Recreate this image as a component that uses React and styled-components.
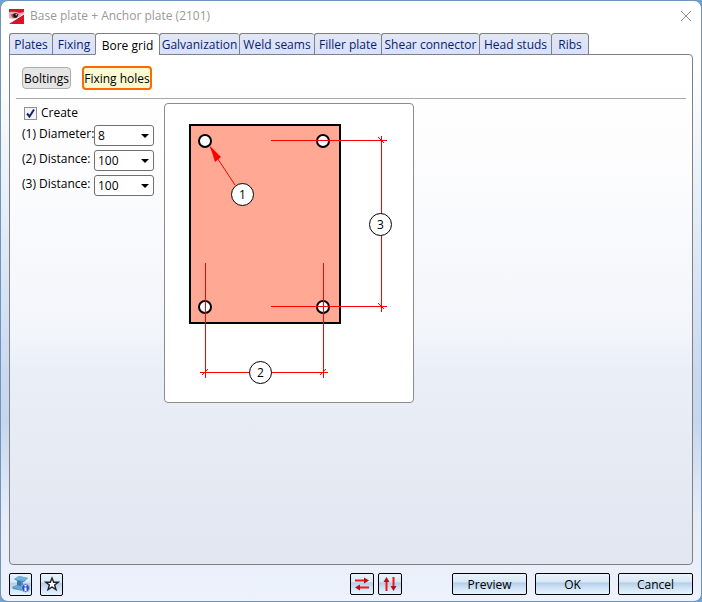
import React, { useState } from "react";
import styled, { createGlobalStyle, css } from "styled-components";

const Global = createGlobalStyle`
  * { box-sizing: border-box; }
  html, body, #root { height: 100%; }
  body {
    margin: 0;
    background: #6ba3d6;
    font-family: "Open Sans", "Noto Sans", sans-serif;
    font-size: 12px;
    line-height: 16px;
    color: #000;
  }
  button, select, input { font: inherit; color: inherit; margin: 0; }
`;

const Dialog = styled.main`
  height: 100vh;
  display: flex;
  flex-direction: column;
  padding: 0 8px;
  border: 1px solid #6f95ba;
  border-radius: 8px;
  background: linear-gradient(#fff 0%, #fff 10%, #c9daf0 62%, #c5d7ee 70%, #e6edf9 86%, #edf2fc 100%);
`;

const TitleBar = styled.header`
  display: flex;
  align-items: center;
  height: 32px;
  flex: none;
  gap: 6px;
  padding-bottom: 2px;
  color: #999;
`;

const Title = styled.h1`
  flex: 1;
  margin: 0;
  font-size: 12px;
  font-weight: 400;
`;

const CloseButton = styled.button`
  display: flex;
  padding: 0 1px 0 0;
  border: 0;
  background: none;
  color: #8c8c8c;
`;

const TabList = styled.div`
  display: flex;
  align-items: flex-start;
  height: 21px;
  flex: none;
`;

const Tab = styled.button`
  flex: 0 0 ${(p) => p.$width}px;
  height: 22px;
  padding: 2px 0 0;
  white-space: nowrap;
  border: 1px solid #808080;
  border-right-width: ${(p) => (p.$last ? 1 : 0)}px;
  border-radius: 3px 3px 0 0;
  background: linear-gradient(#e2e7f3, #d7e1ff);
  color: #0a1c6c;
  ${(p) =>
    p.$active &&
    css`
      position: relative;
      border-bottom-color: #fff;
      background: #fff;
      color: #000;
      padding-top: 4px;
    `}
`;

const Panel = styled.section`
  flex: 1;
  min-height: 0;
  padding: 11px 6px;
  border: 1px solid #808080;
  border-radius: 0 4px 4px 4px;
  background: linear-gradient(#fff 0%, #fdfdfe 20%, #f2f5fa 55%, #eaeef7 62%, #e1e6f0 100%);
`;

const SubTabs = styled.nav`
  display: flex;
  align-items: center;
  gap: 11px;
  height: 33px;
  padding: 0 6px 9px;
  border-bottom: 1px solid #a9a9a9;
`;

const SubTab = styled.button`
  display: flex;
  align-items: center;
  justify-content: center;
  height: ${(p) => (p.$active ? 24 : 22)}px;
  width: ${(p) => (p.$active ? 70 : 49)}px;
  padding: 2px 0 0;
  white-space: nowrap;
  border: ${(p) => (p.$active ? "2px solid #ff6a00" : "1px solid #adadad")};
  border-radius: 4px;
  background: ${(p) => (p.$active ? "#fafad2" : "#e5e5e5")};
`;

const Content = styled.div`
  display: flex;
  align-items: flex-start;
  gap: 10px;
  padding: 4px 6px 0;
`;

const Form = styled.form`
  display: grid;
  grid-template-columns: 72px 60px;
  row-gap: 4px;
  padding-top: 2px;
`;

const CheckLabel = styled.label`
  grid-column: 1 / -1;
  display: flex;
  align-items: center;
  gap: 4px;
  height: 16px;
  padding-left: 2px;
`;

const CheckBox = styled.input`
  appearance: none;
  width: 13px;
  height: 13px;
  border: 1px solid #8e8f8f;
  background: #f4f4f4
    url("data:image/svg+xml,%3Csvg xmlns='http://www.w3.org/2000/svg' viewBox='0 0 11 11'%3E%3Cpath d='M2 5.5 4.5 8.5 9 1.5' fill='none' stroke='%2312286e' stroke-width='2'/%3E%3C/svg%3E");
`;

const FieldLabel = styled.label`
  white-space: nowrap;
  padding-top: 1px;
`;

const SelectBox = styled.select`
  appearance: none;
  height: 21px;
  padding: 0 3px;
  border: 1px solid #707070;
  border-radius: 3px;
  background: #fff
    url("data:image/svg+xml,%3Csvg xmlns='http://www.w3.org/2000/svg' viewBox='0 0 8 4'%3E%3Cpath d='M0 0H8L4 4Z'/%3E%3C/svg%3E")
    no-repeat right 4px center / 8px 4px;
`;

const Figure = styled.figure`
  margin: 0;
  border: 1px solid #8c8c8c;
  border-radius: 4px;
  background: #fff;
  svg { display: block; }
`;

const Footer = styled.footer`
  display: flex;
  align-items: center;
  gap: 50px;
  height: 36px;
  flex: none;
  padding-top: 2px;
`;

const ButtonGroup = styled.div`
  display: flex;
  gap: ${(p) => p.$gap}px;
  margin-left: ${(p) => (p.$push ? "auto" : 0)};
`;

const PushButton = styled.button`
  display: flex;
  align-items: center;
  justify-content: center;
  width: ${(p) => p.$width}px;
  height: ${(p) => (p.$tall ? 23 : 22)}px;
  padding: ${(p) => (p.$icon ? 0 : "2px 0 0")};
  border: 1px solid #000;
  border-radius: 2px;
  background: linear-gradient(#e9f3fb 0%, #d9e9f6 38%, #b5cfe9 45%, #d5e6f8 75%, #e4f4fd 100%);
`;

const tabs = [
  ["Plates", 43],
  ["Fixing", 43],
  ["Bore grid", 64],
  ["Galvanization", 80],
  ["Weld seams", 75],
  ["Filler plate", 67],
  ["Shear connector", 98],
  ["Head studs", 72],
  ["Ribs", 38],
];

const fields = [
  { id: "diameter", label: "(1) Diameter:", value: "8", options: ["8", "10", "12"] },
  { id: "distance-x", label: "(2) Distance:", value: "100", options: ["80", "100", "120"] },
  { id: "distance-y", label: "(3) Distance:", value: "100", options: ["80", "100", "120"] },
];

const AppIcon = () => (
  <svg width="15" height="15" viewBox="0 0 15 15" aria-hidden="true">
    <rect width="15" height="15" fill="#d9112b" />
    <path d="M0 3Q5 2 11 4L15 3V5L0 14Z" fill="#f0a9b0" />
    <path d="M0 9 4 10 9 9 0 14.5Z" fill="#fff" />
    <path d="M2 6Q5 3 10 5L8 8Q5 10 3 8Z" fill="#7b5654" />
    <circle cx="6.5" cy="6.5" r="2.2" fill="#111" />
    <circle cx="7.2" cy="5.8" r="0.7" fill="#fff" />
    <path d="M0 15 15 6V15Z" fill="#d9112b" />
    <path d="M0 14.5 15 5" stroke="#fff" />
  </svg>
);

const BeamIcon = () => (
  <svg width="20" height="20" viewBox="0 0 20 20" aria-hidden="true">
    <path d="M3 5 8 2 17 4 13 8 12 8 12 11 16 12 12 17 2 15 1 13 6 11V7Z" fill="#4f91bf" />
    <path d="M3 5 8 2 17 4 12 7Z" fill="#78b1d8" />
    <path d="M1 13 6 11 12 12 9 16Z" fill="#6aa4cc" />
    <path d="M6 7 10 7V12L6 11Z" fill="#3979ab" />
    <circle cx="14.5" cy="14" r="4" fill="#2854bd" stroke="#96b1e5" />
    <path d="M14.5 11V12.5M14.5 13.5V17" stroke="#fff" strokeWidth="2" />
  </svg>
);

const StarIcon = () => (
  <svg width="16" height="16" viewBox="0 0 16 16" aria-hidden="true">
    <path
      d="M8 2 9.7 6.2H14.2L10.7 9 12 13.7 8 11 4 13.7 5.3 9 1.8 6.2H6.3Z"
      fill="#f5faff"
      stroke="#222"
      strokeWidth="1.4"
    />
  </svg>
);

const SwapIcon = ({ vertical }) => (
  <svg width="16" height="16" viewBox="0 0 16 16" aria-hidden="true">
    <g transform={vertical ? "rotate(-90 8 8)" : undefined}>
      <path d="M1 4.5H11M5 11.5H15" stroke="#f01818" strokeWidth="2" />
      <path d="M10 1.5 15 4.5 10 7.5Z" fill="#b31217" />
      <path d="M6 8.5 1 11.5 6 14.5Z" fill="#b31217" />
    </g>
  </svg>
);

const holes = [[40, 37], [158, 37], [40, 203], [158, 203]];
const callouts = [[77.5, 90.5, "1"], [95.5, 268.5, "2"], [215.5, 120.5, "3"]];

const PlateDrawing = () => (
  <svg width="248" height="298" viewBox="0 0 248 298" role="img" aria-label="Plate with fixing holes">
    <rect x="25" y="21" width="150" height="198" fill="#ffa893" stroke="#000" strokeWidth="2" />
    {holes.map(([x, y]) => (
      <circle key={`${x}-${y}`} cx={x} cy={y} r="6" fill="#fff" stroke="#000" strokeWidth="2" />
    ))}
    <g stroke="#f00" fill="none">
      <path d="M106 36.5H222M106 202.5H222M216.5 32V208M35 268.5H163" />
      <path d="M40.5 159V274M158.5 159V274" />
      <path d="M213 33 219 39M213 199 219 205M37 271 43 265M155 271 161 265" />
      <path d="M45 43 70 81" />
    </g>
    <path d="M45 42 56 53 50 58Z" fill="#f00" />
    {callouts.map(([x, y, n]) => (
      <g key={n}>
        <circle cx={x} cy={y} r="11" fill="#fff" stroke="#000" />
        <text x={x} y={y + 4} textAnchor="middle" fontSize="12">{n}</text>
      </g>
    ))}
  </svg>
);

export default function App() {
  const [tab, setTab] = useState("Bore grid");
  const [subTab, setSubTab] = useState("Fixing holes");
  return (
    <>
      <Global />
      <Dialog>
        <TitleBar>
          <AppIcon />
          <Title>Base plate + Anchor plate (2101)</Title>
          <CloseButton aria-label="Close">
            <svg width="12" height="12" viewBox="0 0 12 12">
              <path d="M1 1 11 11M11 1 1 11" stroke="currentColor" fill="none" />
            </svg>
          </CloseButton>
        </TitleBar>
        <TabList role="tablist">
          {tabs.map(([name, width], i) => (
            <Tab
              key={name}
              role="tab"
              aria-selected={tab === name}
              $active={tab === name}
              $width={width}
              $last={i === tabs.length - 1}
              onClick={() => setTab(name)}
            >
              {name}
            </Tab>
          ))}
        </TabList>
        <Panel>
          <SubTabs>
            {["Boltings", "Fixing holes"].map((name) => (
              <SubTab key={name} $active={subTab === name} onClick={() => setSubTab(name)}>
                {name}
              </SubTab>
            ))}
          </SubTabs>
          <Content>
            <Form>
              <CheckLabel>
                <CheckBox type="checkbox" defaultChecked />
                Create
              </CheckLabel>
              {fields.map((f) => (
                <React.Fragment key={f.id}>
                  <FieldLabel htmlFor={f.id}>{f.label}</FieldLabel>
                  <SelectBox id={f.id} defaultValue={f.value}>
                    {f.options.map((o) => (
                      <option key={o}>{o}</option>
                    ))}
                  </SelectBox>
                </React.Fragment>
              ))}
            </Form>
            <Figure>
              <PlateDrawing />
            </Figure>
          </Content>
        </Panel>
        <Footer>
          <ButtonGroup $gap={8}>
            <PushButton $icon $width={23} $tall aria-label="Profile information"><BeamIcon /></PushButton>
            <PushButton $icon $width={23} $tall aria-label="Favourites"><StarIcon /></PushButton>
          </ButtonGroup>
          <ButtonGroup $gap={4} $push>
            <PushButton $icon $width={24} aria-label="Swap horizontally"><SwapIcon /></PushButton>
            <PushButton $icon $width={24} aria-label="Swap vertically"><SwapIcon vertical /></PushButton>
          </ButtonGroup>
          <ButtonGroup $gap={8}>
            <PushButton $width={75}>Preview</PushButton>
            <PushButton $width={75}>OK</PushButton>
            <PushButton $width={75}>Cancel</PushButton>
          </ButtonGroup>
        </Footer>
      </Dialog>
    </>
  );
}
